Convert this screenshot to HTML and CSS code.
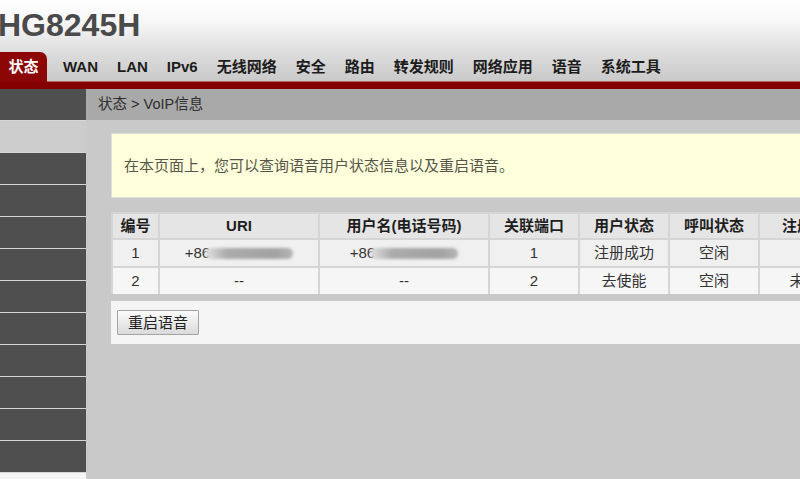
FILE: index.html
```html
<!DOCTYPE html>
<html lang="zh-CN">
<head>
<meta charset="utf-8">
<title>HG8245H - VoIP信息</title>
<link rel="stylesheet" href="styles.css">
</head>
<body>
<div class="page">
  <header class="top">
    <div class="brand">HG8245H</div>
    <nav class="menu">
      <ul>
        <li class="active">状态</li>
        <li class="first">WAN</li>
        <li>LAN</li>
        <li>IPv6</li>
        <li>无线网络</li>
        <li>安全</li>
        <li>路由</li>
        <li>转发规则</li>
        <li>网络应用</li>
        <li>语音</li>
        <li>系统工具</li>
      </ul>
    </nav>
    <div class="redbar"></div>
  </header>
  <div class="body">
    <aside class="side">
      <div class="item"></div>
      <div class="item sel"></div>
      <div class="item"></div>
      <div class="item"></div>
      <div class="item"></div>
      <div class="item"></div>
      <div class="item"></div>
      <div class="item"></div>
      <div class="item"></div>
      <div class="item"></div>
      <div class="item"></div>
      <div class="item"></div>
      <div class="rest"></div>
    </aside>
    <main class="main">
      <div class="crumb">状态 &gt; VoIP信息</div>
      <div class="content">
        <div class="info">在本页面上，您可以查询语音用户状态信息以及重启语音。</div>
        <table class="grid">
          <thead>
            <tr>
              <th class="c1">编号</th>
              <th class="c2">URI</th>
              <th class="c3">用户名(电话号码)</th>
              <th class="c4">关联端口</th>
              <th class="c5">用户状态</th>
              <th class="c6">呼叫状态</th>
              <th class="c7">注册状态</th>
              <th class="c8">注册时间</th>
            </tr>
          </thead>
          <tbody>
            <tr class="r1">
              <td>1</td>
              <td>+86<span class="mask"></span></td>
              <td>+86<span class="mask"></span></td>
              <td>1</td>
              <td>注册成功</td>
              <td>空闲</td>
              <td>--</td>
              <td>--</td>
            </tr>
            <tr class="r2">
              <td>2</td>
              <td>--</td>
              <td>--</td>
              <td>2</td>
              <td>去使能</td>
              <td>空闲</td>
              <td>未注册</td>
              <td>--</td>
            </tr>
          </tbody>
        </table>
        <div class="actions">
          <button class="btn" type="button">重启语音</button>
        </div>
      </div>
    </main>
  </div>
</div>
</body>
</html>
```
FILE: styles.css
```css
html, body {
  margin: 0;
  padding: 0;
  overflow: hidden;
  height: 100%;
}
body {
  font-family: "Liberation Sans", "Noto Sans CJK SC", sans-serif;
  background: #c9c9c9;
  color: #333;
}
.page {
  width: 1000px;
  height: 100%;
  display: flex;
  flex-direction: column;
}
.top {
  background: linear-gradient(#ffffff 0%, #f7f7f7 25%, #dcdcdc 60%, #c4c4c4 100%);
}
.brand {
  height: 52px;
  box-sizing: border-box;
  padding-top: 9px;
  margin-left: -2px;
  font-size: 32px;
  line-height: 32px;
  font-weight: bold;
  color: #4a4a4a;
}
.menu ul {
  list-style: none;
  margin: 0;
  padding: 0;
  display: flex;
  height: 30px;
}
.menu li {
  font-size: 15px;
  font-weight: bold;
  line-height: 30px;
  padding: 0 9.5px;
  color: #1c1c1c;
  white-space: nowrap;
}
.menu li.active {
  background: #8c0606;
  color: #fff;
  padding: 0 8.5px;
  border-radius: 0 7px 0 0;
}
.menu li.first {
  margin-left: 6.5px;
}
.redbar {
  height: 7px;
  background: #840000;
  box-shadow: 0 -1px 0 #b46464;
}
.body {
  flex: 1;
  display: flex;
  min-height: 0;
}
.side {
  width: 86px;
  flex: none;
  display: flex;
  flex-direction: column;
}
.side .item {
  height: 31px;
  flex: none;
  background: #4f4f4f;
  border-bottom: 1px solid #d6d6d6;
}
.side .item.sel {
  background: #cccccc;
}
.side .rest {
  flex: 1;
  background: #f4f4f4;
}
.main {
  flex: 1;
  min-width: 0;
}
.crumb {
  height: 31px;
  line-height: 31px;
  background: #a9a9a9;
  font-size: 14.5px;
  padding-left: 12px;
  color: #2e2e2e;
}
.content {
  padding: 13px 0 0 25px;
}
.info {
  height: 63px;
  line-height: 63px;
  background: #ffffdc;
  border: 1px solid #d9e2d9;
  border-right: none;
  font-size: 15px;
  color: #56564a;
  padding-left: 12px;
}
.grid {
  margin-top: 14px;
  border-collapse: separate;
  border-spacing: 0;
  table-layout: fixed;
  width: 873px;
  font-size: 15px;
}
.grid th, .grid td {
  box-sizing: border-box;
  border-left: 2px solid #d5d5d5;
  border-top: 2px solid #d5d5d5;
  padding: 0;
  text-align: center;
  white-space: nowrap;
  overflow: hidden;
}
.grid th {
  background: #e5e5e5;
  line-height: 24px;
  font-weight: bold;
  color: #1e1e1e;
}
.grid td {
  line-height: 26px;
  color: #333;
}
.grid .r1 td { background: #f0f0f0; }
.grid .r2 td { background: #f6f6f6; }
.c1 { width: 47px; }
.c2 { width: 160px; }
.c3 { width: 170px; }
.c4 { width: 90px; }
.c5 { width: 90px; }
.c6 { width: 90px; }
.c7 { width: 106px; }
.c8 { width: 120px; }
.mask {
  display: inline-block;
  width: 88px;
  height: 11px;
  margin-left: -5px;
  vertical-align: -1px;
  border-radius: 6px;
  background: linear-gradient(to right, #e2e2e2, #ababab 25%, #a2a2a2 80%, #b4b4b4);
  filter: blur(1.5px);
}
.actions {
  margin-top: 7px;
  height: 43px;
  background: #f5f5f5;
  box-sizing: border-box;
  padding: 9px 0 0 6px;
}
.btn {
  width: 82px;
  height: 25px;
  padding: 0;
  font-family: "Liberation Sans", "Noto Sans CJK SC", sans-serif;
  font-size: 15px;
  line-height: 23px;
  color: #222;
  background: linear-gradient(#fbfbfb, #dadada);
  border: 1px solid #a4a4a4;
  border-radius: 1px;
}
```
